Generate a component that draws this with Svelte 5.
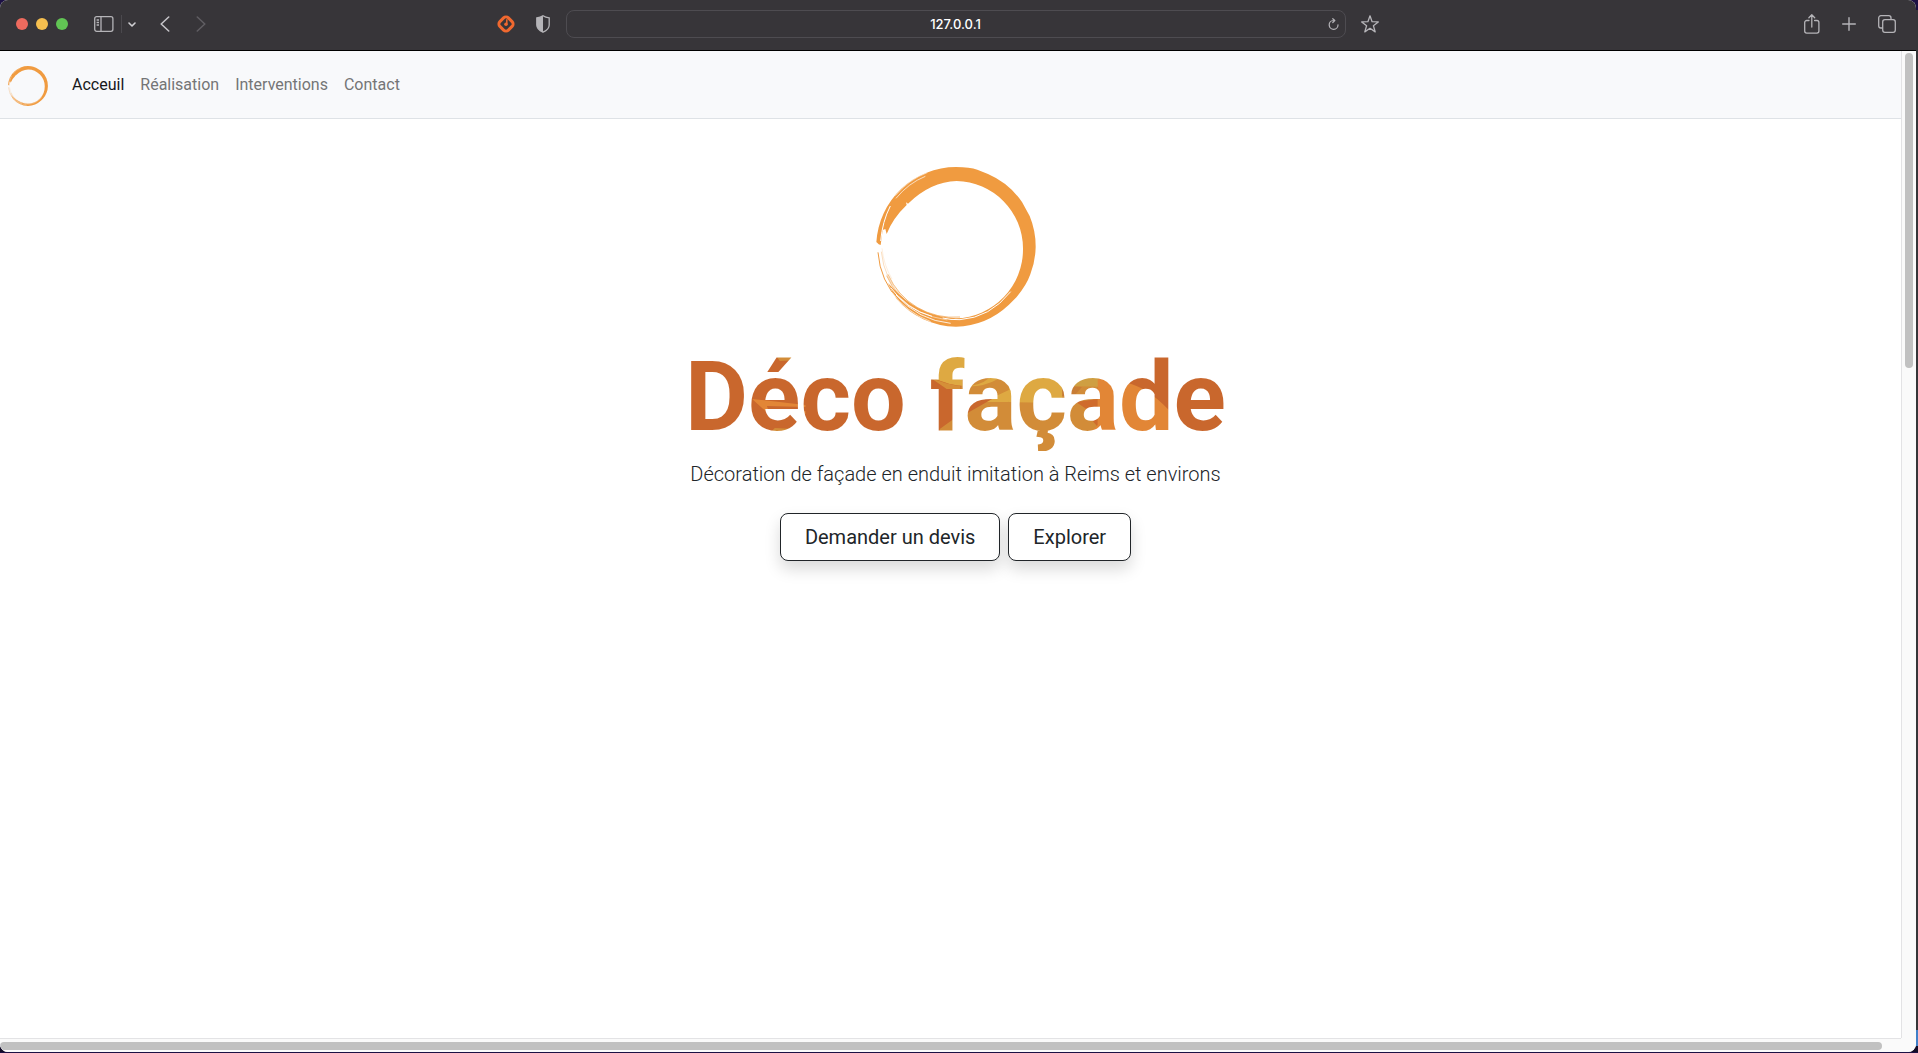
<script>
  const links = ['Acceuil', 'Réalisation', 'Interventions', 'Contact'];
  const current = 'Acceuil';
</script>

{#snippet ring(label)}
  <svg class="ring" viewBox="48 36 480 480" role="img" aria-label={label}>
    <path
      fill="#f09b40"
      d="M49 262A240 240 0 0 1 288 36Q330 36 352 44L384 57A240 240 0 0 1 486 141L509 183A240 240 0 0 1 527 276Q526 320 511 358Q500 390 470 426L446 450A240 240 0 0 1 288 515A239 239 0 0 1 110 432Q96 412 84 384Q100 402 118 418Q190 486 288 490A207 207 0 0 0 489 280A203 203 0 0 0 290 78Q212 80 144 146L138 142L140 150Q98 190 80 237L76 222L68 225L62 270L56 268L50 262Z"
    />
    <g fill="none" stroke="#f09b40">
      <path stroke-width="3" d="M54 292A238 238 0 0 0 120 440" />
      <path stroke-width="1" d="M64 290A228 228 0 0 0 130 430" />
      <path stroke-width="1" stroke-opacity=".5" d="M66 280A222 222 0 0 0 96 372" />
      <path stroke-width="2" d="M84 358A214 214 0 0 0 300 486" />
      <path stroke-width="2" d="M80 362A218 218 0 0 0 120 424" />
    </g>
    <g fill="none" stroke="#fff">
      <path stroke-width="3" d="M62 258Q67 200 91 153" />
      <path stroke-width="2" d="M108 130Q146 84 196 64" />
      <path stroke-width="1.5" d="M106 122Q146 74 202 53" />
      <path stroke-width="3" d="M452 410Q390 488 300 494Q272 495 248 489" />
      <path stroke-width="2.5" d="M108 420Q176 496 272 505" />
      <path stroke-width="3" d="M92 398Q140 464 216 484" />
      <path stroke-width="1.5" d="M116 424Q172 482 262 495" />
      <path stroke-width="2" d="M96 412Q136 470 212 500" />
    </g>
  </svg>
{/snippet}

<div class="window">
  <header class="toolbar">
    <div class="side">
      <div class="lights">
        <button class="light close" aria-label="Fermer"></button>
        <button class="light shrink" aria-label="Réduire"></button>
        <button class="light grow" aria-label="Agrandir"></button>
      </div>
      <button class="icon sidebar" aria-label="Barre latérale">
        <svg width="20" height="16" viewBox="0 0 20 16" fill="none" stroke="#b5b4b8" stroke-width="1.3">
          <rect x=".7" y=".7" width="18.2" height="14.6" rx="2" />
          <path d="M7 1v14M2.6 4H5M2.6 6.5H5M2.6 9H5" />
        </svg>
      </button>
      <span class="rule"></span>
      <button class="icon chevron" aria-label="Groupes d’onglets">
        <svg width="8" height="5" viewBox="0 0 8 5" fill="none" stroke="#d0cfd3" stroke-width="1.6" stroke-linecap="round" stroke-linejoin="round">
          <path d="M1 1l3 3 3-3" />
        </svg>
      </button>
      <button class="icon back" aria-label="Précédent">
        <svg width="10" height="16" viewBox="0 0 10 16" fill="none" stroke="#c4c3c7" stroke-width="1.6" stroke-linecap="round" stroke-linejoin="round">
          <path d="M8.7 1L1.2 8l7.5 7" />
        </svg>
      </button>
      <button class="icon next" aria-label="Suivant">
        <svg width="10" height="16" viewBox="0 0 10 16" fill="none" stroke="#5f5d62" stroke-width="1.6" stroke-linecap="round" stroke-linejoin="round">
          <path d="M1.3 1l7.5 7-7.5 7" />
        </svg>
      </button>
      <button class="icon extension" aria-label="Extension">
        <svg width="20" height="20" viewBox="0 0 20 20" fill="none" stroke="#f0682f">
          <rect x="4" y="4" width="12" height="12" rx="3.4" transform="rotate(45 10 10)" stroke-width="3" />
          <path d="M10.8 5.2v4.6" stroke-width="1.5" />
          <circle cx="10" cy="10.2" r="1.8" fill="#f0682f" stroke="none" />
        </svg>
      </button>
      <button class="icon" aria-label="Rapport de confidentialité">
        <svg width="14" height="18" viewBox="0 0 14 18">
          <path d="M7 .8C5 2.2 3 2.7.8 2.9V10c0 3.4 2.6 5.6 6.2 7.2 3.6-1.6 6.2-3.8 6.2-7.2V2.9C11 2.7 9 2.2 7 .8z" fill="none" stroke="#b5b4b8" stroke-width="1.3" />
          <path d="M7 .8C5 2.2 3 2.7.8 2.9V10c0 3.4 2.6 5.6 6.2 7.2z" fill="#b5b4b8" />
        </svg>
      </button>
    </div>

    <div class="address">
      <input type="text" value="127.0.0.1" aria-label="Adresse" />
      <button class="icon reload" aria-label="Recharger">
        <svg width="11" height="12" viewBox="0 0 11 12" fill="none" stroke="#b5b4b8" stroke-width="1.2" stroke-linecap="round" stroke-linejoin="round">
          <path d="M6.5 2.5H5.3a4.4 4.4 0 1 0 4.7 4.3M4.8.7l2 1.800-2 2" />
        </svg>
      </button>
    </div>

    <div class="side end">
      <button class="icon star" aria-label="Ajouter aux favoris">
        <svg width="18" height="18" viewBox="0 0 18 18" fill="none" stroke="#b5b4b8" stroke-width="1.3" stroke-linejoin="round">
          <path d="M9 .8l2.1 5.9 6.200.2-4.900 3.800 1.800 6.200L9 13.300l-5.200 3.600 1.800-6.200L.7 6.900l6.200-.2z" />
        </svg>
      </button>
      <button class="icon" aria-label="Partager">
        <svg width="16" height="20" viewBox="0 0 16 20" fill="none" stroke="#b5b4b8" stroke-width="1.3" stroke-linecap="round" stroke-linejoin="round">
          <path d="M5 6.500H2.700a2 2 0 0 0-2 2v8.600a2 2 0 0 0 2 2h10.200a2 2 0 0 0 2-2V8.500a2 2 0 0 0-2-2h-2.300M7.800 13V1M4.900 3.700L7.800.8l2.900 2.900" />
        </svg>
      </button>
      <button class="icon" aria-label="Nouvel onglet">
        <svg width="14" height="14" viewBox="0 0 14 14" stroke="#b5b4b8" stroke-width="1.4" stroke-linecap="round">
          <path d="M7 .7v12.600M.7 7h12.600" />
        </svg>
      </button>
      <button class="icon" aria-label="Vue d’ensemble des onglets">
        <svg width="18" height="18" viewBox="0 0 18 18" fill="none" stroke="#b5b4b8" stroke-width="1.3" stroke-linejoin="round">
          <rect x="4.7" y="4.7" width="12.6" height="12.6" rx="2.2" />
          <path d="M4.700 13H2.900A2.200 2.200 0 0 1 .7 10.800V2.900A2.200 2.200 0 0 1 2.900.7h7.900A2.200 2.200 0 0 1 13 2.900v1.800" />
        </svg>
      </button>
    </div>
  </header>

  <div class="view">
    <div class="page">
      <nav>
        <a class="brand" href="/">{@render ring('Déco façade')}</a>
        <ul>
          {#each links as link}
            <li><a href="#{link}" class:current={link === current}>{link}</a></li>
          {/each}
        </ul>
      </nav>
      <main>
        <div class="logo">{@render ring('Logo Déco façade')}</div>
        <h1>Déco façade</h1>
        <p>Décoration de façade en enduit imitation à Reims et environs</p>
        <div class="actions">
          <button>Demander un devis</button>
          <button>Explorer</button>
        </div>
      </main>
    </div>
    <div class="track vertical"><span></span></div>
    <div class="track horizontal"><span></span></div>
    <div class="corner"></div>
  </div>
</div>

<style>
  :global(body) {
    margin: 0;
    background: linear-gradient(#1c1044 0 10px, #353538 10px calc(100% - 22px), #3f7fc8 calc(100% - 22px) calc(100% - 6px), #120c26 0);
    overflow: hidden;
  }

  .window {
    box-sizing: border-box;
    display: flex;
    flex-direction: column;
    height: calc(100vh - 1px);
    margin-right: 2px;
    overflow: hidden;
    border-radius: 8px;
    background: #fff;
    font-family: Roboto, 'Liberation Sans', sans-serif;
    color: #212529;
  }

  button {
    font: inherit;
    cursor: pointer;
  }

  .toolbar {
    display: grid;
    grid-template-columns: 1fr minmax(200px, 780px) 1fr;
    align-items: center;
    flex: none;
    height: 48px;
    padding: 0 20px 2px 16px;
    background: #373539;
    border-bottom: 1px solid #000;
  }

  .side {
    display: flex;
    align-items: center;
  }

  .lights {
    display: flex;
    gap: 8px;
  }

  .light {
    width: 12px;
    height: 12px;
    padding: 0;
    border: 0;
    border-radius: 50%;
  }

  .close { background: #ed6a5e; }
  .shrink { background: #f5bf4f; }
  .grow { background: #61c554; }

  .icon {
    display: flex;
    padding: 0;
    border: 0;
    background: none;
  }

  .sidebar { margin-left: 26px; }

  .rule {
    width: 1px;
    height: 18px;
    margin: 0 6px 0 7px;
    background: #4b494e;
  }

  .back { margin-left: 24px; }
  .next { margin-left: 26px; }

  .extension {
    margin: 0 20px 0 auto;
  }

  .side:first-child { padding-right: 16px; }

  .end {
    gap: 22px;
    padding-left: 15px;
  }

  .star { margin-right: auto; }

  .address {
    display: flex;
    align-items: center;
    box-sizing: border-box;
    height: 28px;
    padding: 0 6px 0 16px;
    border: 1px solid #4e4c51;
    border-radius: 8px;
  }

  input {
    flex: 1;
    min-width: 0;
    padding: 0;
    border: 0;
    outline: 0;
    background: none;
    color: #fff;
    font: 500 13px/16px Inter, 'Liberation Sans', sans-serif;
    text-align: center;
  }

  .view {
    flex: 1;
    min-height: 0;
    display: grid;
    grid-template: 1fr 14px / 1fr 15px;
  }

  .page {
    overflow: hidden;
  }

  nav {
    display: flex;
    align-items: center;
    gap: 24px;
    height: 67px;
    padding: 0 8px;
    background: #f8f9fb;
    border-bottom: 1px solid #dee2e6;
  }

  .ring {
    display: block;
    width: 100%;
  }

  .brand {
    width: 40px;
    padding-top: 2px;
  }

  ul {
    display: flex;
    gap: 16px;
    margin: 0;
    padding: 0;
    list-style: none;
  }

  nav li a {
    font-size: 16px;
    line-height: 24px;
    color: #747576;
    text-decoration: none;
  }

  nav li .current {
    color: #17181a;
  }

  main {
    display: flex;
    flex-direction: column;
    align-items: center;
    padding: 48px 0 0 10px;
  }

  .logo {
    width: 160px;
  }

  h1 {
    margin: 16px 0 0;
    font-size: 97px;
    font-weight: 700;
    line-height: 108px;
    color: transparent;
    background: #c9672d url("data:image/svg+xml,%3Csvg xmlns='http://www.w3.org/2000/svg' viewBox='682 343 548 108' preserveAspectRatio='none'%3E%3Cpath fill='%23d28c38' d='M770 350h30v10l-22 1zM773 428l20 1v3h-24zM940 429l14-10 10-43h50v75h-74zM1014 376h86v75h-86z'/%3E%3Cpath fill='%23e28636' d='M750 399l54 6v2l-39-1 3 9zM787 414l17-3v3z'/%3E%3Cpath fill='%23dea942' d='M932 350h58v28q-14 12-40 6l-18-6zM963 386q20 2 36-7v-6h-36zM984 402l26-12v12zM1014 376h50v27l-54-1v-12z'/%3E%3Cpath fill='%23d58f38' d='M928 376q16 8 33 10v3h-14zM1014 388q18-10 38-12l-4-4h-34z'/%3E%3Cpath fill='%23c9672d' d='M961 402q14-5 32-3l-32 18z'/%3E%3Cpath fill='%23cf9f42' d='M1066 375h46v12l-42-1z'/%3E%3Cpath fill='%23c87d35' d='M1064 386l20 1-8 9h-12z'/%3E%3Cpath fill='%23cf6b2c' d='M1078 402l22-3v28l-6-7-4-10z'/%3E%3Cpath fill='%23e28636' d='M1100 379l17-4v76h-23v-20l6-6zM1115 380l14 3q20 3 44 28v40h-58z'/%3E%3C/svg%3E") 0 0 / 100% 100% no-repeat;
    -webkit-background-clip: text;
    background-clip: text;
  }

  p {
    margin: 8px 0 24px;
    font-size: 20px;
    font-weight: 300;
    line-height: 30px;
  }

  .actions {
    display: flex;
    gap: 8px;
  }

  .actions button {
    padding: 8px 24px;
    border: 1px solid #212529;
    border-radius: 8px;
    background: #fff;
    box-shadow: 0 8px 16px rgba(0, 0, 0, 0.15);
    color: #212529;
    font-size: 20px;
    line-height: 30px;
  }

  .track {
    background: #fafafa;
  }

  .vertical {
    padding: 2px 3px;
    border-left: 1px solid #e3e3e5;
  }

  .horizontal {
    padding: 3px 0;
    border-top: 1px solid #e3e3e5;
  }

  .track span {
    display: block;
    border-radius: 4px;
    background: #c1c1c1;
  }

  .vertical span {
    width: 8px;
    height: 32%;
  }

  .horizontal span {
    width: 99%;
    height: 8px;
  }

  .corner {
    background: #fafafa;
  }
</style>
